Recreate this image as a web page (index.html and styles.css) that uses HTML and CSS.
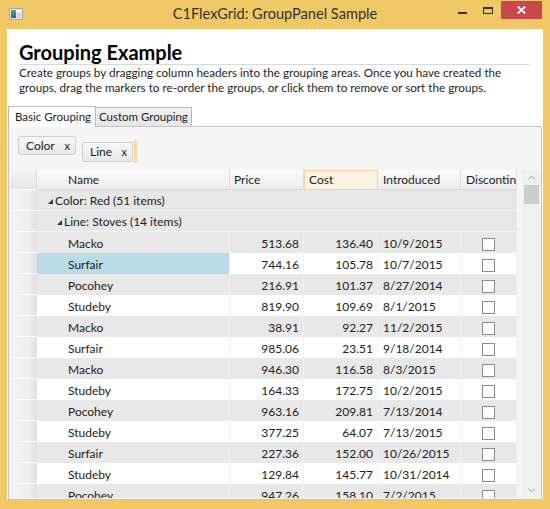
FILE: index.html
```html
<!DOCTYPE html>
<html>
<head>
<meta charset="utf-8">
<title>C1FlexGrid: GroupPanel Sample</title>
<link rel="stylesheet" href="styles.css">
</head>
<body>
<div class="window">
  <div class="titlebar">
    <svg class="appicon" width="14" height="12" viewBox="0 0 14 12">
      <defs>
        <linearGradient id="ig" x1="0" y1="0" x2="0" y2="1">
          <stop offset="0" stop-color="#5aa97a"/>
          <stop offset="1" stop-color="#2f5fa5"/>
        </linearGradient>
      </defs>
      <rect x="0.5" y="0.5" width="13" height="11" fill="#e4e4e4" stroke="#a9a9a9"/>
      <rect x="2" y="2" width="5" height="8" fill="url(#ig)"/>
      <rect x="8" y="2" width="4" height="2" fill="#ffffff"/>
      <rect x="8" y="5" width="4" height="5" fill="#d3d3d3"/>
    </svg>
    <div class="title">C1FlexGrid: GroupPanel Sample</div>
    <div class="controls">
      <div class="wbtn"><span class="min-glyph"></span></div>
      <div class="wbtn"><span class="max-glyph"></span></div>
      <div class="wbtn close">
        <svg width="9" height="8" viewBox="0 0 9 8"><path d="M0.8 0.5 L8.2 7.5 M8.2 0.5 L0.8 7.5" stroke="#ffffff" stroke-width="1.8" fill="none"/></svg>
      </div>
    </div>
  </div>

  <div class="client">
    <h1 class="heading">Grouping Example</h1>
    <p class="desc">Create groups by dragging column headers into the grouping areas. Once you have created the<br>groups, drag the markers to re-order the groups, or click them to remove or sort the groups.</p>

    <div class="tabs">
      <div class="tabstrip">
        <div class="tab selected">Basic Grouping</div>
        <div class="tab">Custom Grouping</div>
      </div>
      <div class="panel">
        <div class="grouparea">
          <div class="chip chip-color"><span>Color</span><span class="chip-x">x</span></div>
          <div class="chip chip-line"><span>Line</span><span class="chip-x">x</span></div>
          <div class="marker"></div>
        </div>

        <div class="gridwrap">
          <div class="grid">
            <div class="row header">
              <div class="hcell rh"></div>
              <div class="hcell name">Name</div>
              <div class="hcell">Price</div>
              <div class="hcell cost">Cost</div>
              <div class="hcell intro">Introduced</div>
              <div class="hcell intro">Discontinued</div>
            </div>
            <div class="rows">
              <div class="row group">
                <div class="rh"></div>
                <div class="gcell lvl1"><span class="tri"></span>Color: Red (51 items)</div>
              </div>
              <div class="row group">
                <div class="rh"></div>
                <div class="gcell lvl2"><span class="tri"></span>Line: Stoves (14 items)</div>
              </div>

              <div class="row alt"><div class="rh"></div><div class="cell name">Macko</div><div class="cell num">513.68</div><div class="cell num">136.40</div><div class="cell intro">10/9/2015</div><div class="cell chk"><span class="box"></span></div></div>
              <div class="row"><div class="rh"></div><div class="cell name sel">Surfair</div><div class="cell num">744.16</div><div class="cell num">105.78</div><div class="cell intro">10/7/2015</div><div class="cell chk"><span class="box"></span></div></div>
              <div class="row alt"><div class="rh"></div><div class="cell name">Pocohey</div><div class="cell num">216.91</div><div class="cell num">101.37</div><div class="cell intro">8/27/2014</div><div class="cell chk"><span class="box"></span></div></div>
              <div class="row"><div class="rh"></div><div class="cell name">Studeby</div><div class="cell num">819.90</div><div class="cell num">109.69</div><div class="cell intro">8/1/2015</div><div class="cell chk"><span class="box"></span></div></div>
              <div class="row alt"><div class="rh"></div><div class="cell name">Macko</div><div class="cell num">38.91</div><div class="cell num">92.27</div><div class="cell intro">11/2/2015</div><div class="cell chk"><span class="box"></span></div></div>
              <div class="row"><div class="rh"></div><div class="cell name">Surfair</div><div class="cell num">985.06</div><div class="cell num">23.51</div><div class="cell intro">9/18/2014</div><div class="cell chk"><span class="box"></span></div></div>
              <div class="row alt"><div class="rh"></div><div class="cell name">Macko</div><div class="cell num">946.30</div><div class="cell num">116.58</div><div class="cell intro">8/3/2015</div><div class="cell chk"><span class="box"></span></div></div>
              <div class="row"><div class="rh"></div><div class="cell name">Studeby</div><div class="cell num">164.33</div><div class="cell num">172.75</div><div class="cell intro">10/2/2015</div><div class="cell chk"><span class="box"></span></div></div>
              <div class="row alt"><div class="rh"></div><div class="cell name">Pocohey</div><div class="cell num">963.16</div><div class="cell num">209.81</div><div class="cell intro">7/13/2014</div><div class="cell chk"><span class="box"></span></div></div>
              <div class="row"><div class="rh"></div><div class="cell name">Studeby</div><div class="cell num">377.25</div><div class="cell num">64.07</div><div class="cell intro">7/13/2015</div><div class="cell chk"><span class="box"></span></div></div>
              <div class="row alt"><div class="rh"></div><div class="cell name">Surfair</div><div class="cell num">227.36</div><div class="cell num">152.00</div><div class="cell intro">10/26/2015</div><div class="cell chk"><span class="box"></span></div></div>
              <div class="row"><div class="rh"></div><div class="cell name">Studeby</div><div class="cell num">129.84</div><div class="cell num">145.77</div><div class="cell intro">10/31/2014</div><div class="cell chk"><span class="box"></span></div></div>
              <div class="row alt"><div class="rh"></div><div class="cell name">Pocohey</div><div class="cell num">947.26</div><div class="cell num">158.10</div><div class="cell intro">7/2/2015</div><div class="cell chk"><span class="box"></span></div></div>
            </div>
          </div>

          <div class="scrollbar">
            <div class="sb-btn up">
              <svg width="7" height="5" viewBox="0 0 7 5"><path d="M0.5 4.5 L3.5 1 L6.5 4.5" stroke="#a6a6a6" stroke-width="1" fill="none"/></svg>
            </div>
            <div class="sb-thumb"></div>
            <div class="sb-space"></div>
            <div class="sb-btn down">
              <svg width="7" height="5" viewBox="0 0 7 5"><path d="M0.5 0.5 L3.5 4 L6.5 0.5" stroke="#a6a6a6" stroke-width="1" fill="none"/></svg>
            </div>
          </div>
        </div>
      </div>
    </div>
  </div>
</div>
</body>
</html>
```

FILE: styles.css
```css
html, body {
  margin: 0;
  padding: 0;
}

body {
  width: 550px;
  height: 509px;
  overflow: hidden;
  background: #f0c865;
  font-family: "Lato", "Open Sans", sans-serif;
}

.window {
  width: 550px;
  height: 509px;
  display: flex;
  flex-direction: column;
  background: #f0c865;
}

/* ---------- title bar ---------- */
.titlebar {
  height: 29px;
  flex: none;
  display: grid;
  grid-template-columns: 100%;
  grid-template-rows: 29px;
}

.titlebar > * {
  grid-area: 1 / 1;
}

.appicon {
  justify-self: start;
  align-self: start;
  margin: 8px 0 0 9px;
}

.title {
  justify-self: center;
  align-self: start;
  padding-top: 3.5px;
  font-size: 14.6px;
  line-height: 20px;
  color: #333333;
  white-space: nowrap;
}

.controls {
  justify-self: end;
  align-self: start;
  display: flex;
  margin: 1px 8px 0 0;
}

.wbtn {
  width: 26px;
  height: 18px;
  display: flex;
  justify-content: center;
  align-items: flex-end;
  padding-bottom: 5px;
  box-sizing: border-box;
}

.min-glyph {
  display: block;
  width: 9px;
  height: 2px;
  background: #333333;
}

.max-glyph {
  display: block;
  width: 10px;
  height: 7px;
  box-sizing: border-box;
  border: 1px solid #333333;
  border-top-width: 2px;
}

.wbtn.close {
  width: 41px;
  background: #c9484d;
  align-items: center;
  padding-bottom: 0;
}

/* ---------- client ---------- */
.client {
  flex: 1;
  min-height: 0;
  margin: 0 7px 9px 7px;
  background: #ffffff;
  display: flex;
  flex-direction: column;
  padding-top: 12px;
  box-sizing: border-box;
}

.heading {
  margin: 0 13px 0 12px;
  font-size: 20px;
  font-weight: 700;
  line-height: 23px;
  color: #000000;
  border-bottom: 1px solid #dadada;
}

.desc {
  margin: 0 0 0 12px;
  font-size: 11.7px;
  line-height: 15px;
  color: #1e1e1e;
  white-space: nowrap;
}

/* ---------- tabs ---------- */
.tabs {
  flex: 1;
  min-height: 0;
  margin: 11px 1px 0 1px;
  display: flex;
  flex-direction: column;
}

.tabstrip {
  height: 20px;
  flex: none;
  display: flex;
  align-items: flex-start;
  position: relative;
  z-index: 1;
}

.tab {
  box-sizing: border-box;
  font-size: 11.5px;
  line-height: 15px;
  color: #1e1e1e;
  border: 1px solid #b8b8b8;
  border-bottom: none;
  white-space: nowrap;
}

.tab.selected {
  width: 88px;
  height: 21px;
  padding: 2px 0 0 6px;
  background: #ffffff;
}

.tab:not(.selected) {
  width: 96px;
  height: 19px;
  margin-top: 1px;
  padding: 1px 0 0 3px;
  background: linear-gradient(#f2f2f2, #e6e6e6);
  border-left: none;
}

.panel {
  flex: 1;
  min-height: 0;
  border: 1px solid #c4c4c4;
  background: #f5f5f5;
  display: flex;
  flex-direction: column;
  padding: 0 1px 1px 1px;
}

/* ---------- group area ---------- */
.grouparea {
  height: 43px;
  flex: none;
  box-sizing: border-box;
  padding: 9px 0 0 8px;
  display: flex;
  align-items: flex-start;
}

.chip {
  box-sizing: border-box;
  display: flex;
  justify-content: space-between;
  border: 1px solid #cfcfcf;
  border-radius: 3px;
  background: linear-gradient(#f7f7f7, #e9e9e9);
  font-size: 12px;
  color: #222222;
}

.chip-color {
  width: 58px;
  height: 19px;
  line-height: 17px;
  padding: 0 5px 0 7px;
}

.chip-line {
  width: 51px;
  height: 20px;
  line-height: 18px;
  margin: 6px 0 0 6px;
  padding: 0 5px 0 7px;
}

.chip-x {
  font-size: 11px;
}

.marker {
  width: 3px;
  height: 23px;
  margin: 4px 0 0 1px;
  background: #fbd79f;
}

/* ---------- grid ---------- */
.gridwrap {
  flex: 1;
  min-height: 0;
  display: flex;
}

.grid {
  width: 507px;
  display: flex;
  flex-direction: column;
  overflow: hidden;
}

.row {
  display: grid;
  grid-template-columns: 27px 193px 74px 74px 83px 56px;
  height: 21px;
  line-height: 23px;
  font-size: 12px;
  color: #222222;
  background: #ffffff;
  flex: none;
}

.row.alt {
  background: #e8e8e8;
}

.row.header {
  height: 20px;
  line-height: 19px;
  background: #f5f5f5;
}

.rows {
  flex: 1;
  min-height: 0;
  overflow: hidden;
}

.hcell {
  box-sizing: border-box;
  height: 20px;
  padding-left: 4px;
  border-right: 1px solid #dcdcdc;
  border-bottom: 1px solid #d6d6d6;
  background: linear-gradient(#fbfbfb, #ededed);
  white-space: nowrap;
  overflow: hidden;
}

.hcell.rh {
  padding: 0;
  background: linear-gradient(#f4f4f4, #e6e6e6);
}

.hcell.name {
  padding-left: 31px;
}

.hcell.cost {
  background: #fdf2e1;
  border: 1px solid #f6d29c;
  line-height: 17px;
}

.hcell.intro {
  padding-left: 5px;
}

.rh {
  box-sizing: border-box;
  background: linear-gradient(90deg, #f4f4f4 0%, #efefef 65%, #e0e0e0 100%);
  border-bottom: 1px solid #fafafa;
}

.row.group {
  background: #e7e7e7;
}

.gcell {
  grid-column: 2 / -1;
  box-sizing: border-box;
  border-bottom: 1px solid #f2f2f2;
  line-height: 19px;
  padding-top: 1px;
  display: flex;
  align-items: center;
  white-space: nowrap;
}

.gcell.lvl1 {
  padding-left: 11px;
}

.gcell.lvl2 {
  padding-left: 20px;
}

.tri {
  width: 0;
  height: 0;
  border-left: 5px solid transparent;
  border-bottom: 5px solid #333333;
  margin-right: 2px;
  margin-top: 1px;
}

.cell {
  box-sizing: border-box;
  border-right: 1px solid #f1f1f1;
  white-space: nowrap;
  overflow: hidden;
}

.cell.name {
  padding-left: 31px;
}

.cell.sel {
  background: #badbe8;
}

.cell.num {
  text-align: right;
  padding-right: 4px;
}

.cell.intro {
  padding-left: 5px;
}

.cell.chk {
  display: flex;
  justify-content: center;
  align-items: flex-start;
  padding-top: 6px;
}

.box {
  display: block;
  width: 11px;
  height: 11px;
  border: 1px solid #8a8a8a;
  background: #ffffff;
}

/* ---------- scrollbar ---------- */
.scrollbar {
  width: 17px;
  margin-left: 6px;
  background: #f0f0f0;
  display: flex;
  flex-direction: column;
}

.sb-btn {
  display: flex;
  justify-content: center;
  align-items: center;
}

.sb-btn.up {
  height: 15px;
}

.sb-btn.down {
  height: 16px;
}

.sb-thumb {
  height: 19px;
  margin: 0 1px;
  background: #cdcdcd;
}

.sb-space {
  flex: 1;
}
```
